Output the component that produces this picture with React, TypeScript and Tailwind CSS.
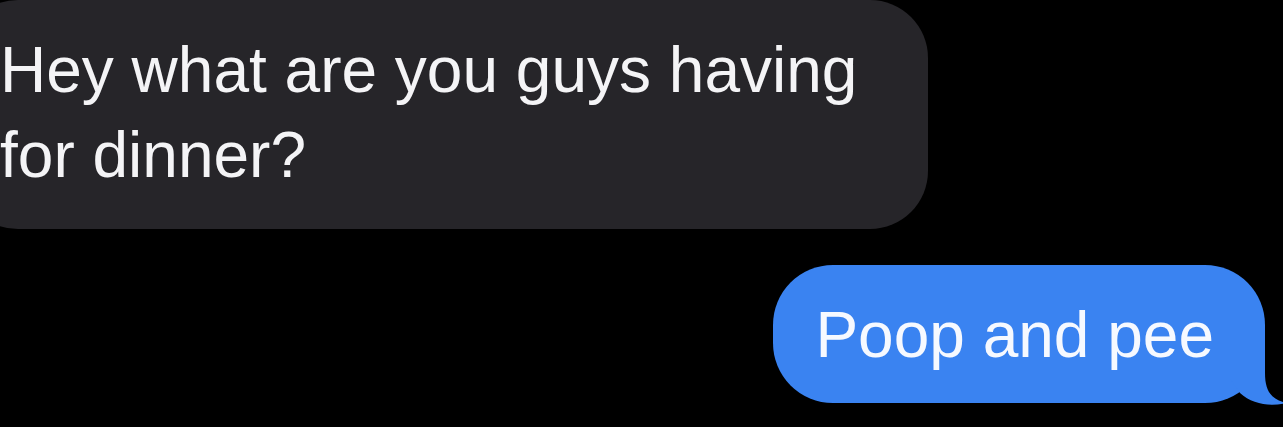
import React from "react";

export default function App() {
  return (
    <div
      className="w-[1283px] h-[427px] overflow-hidden bg-black text-white"
      style={{ fontFamily: '"Liberation Sans", Arial, sans-serif' }}
    >
      <div className="flex flex-col">
        {/* incoming grey bubble */}
        <div className="ml-[-40px] w-[968px] rounded-[58px] bg-[#262529] pl-[40px] pr-[56px] pt-[28px] pb-[31px] text-[64px] leading-[85px] text-[#f4f4f6]">
          Hey what are you guys having for dinner?
        </div>

        {/* outgoing blue bubble */}
        <div className="mt-[36px] flex justify-end pr-[18px]">
          <div className="relative rounded-[60px] bg-[#3a83f1] pl-[42px] pr-[51px] pt-[28px] pb-[25px] text-[64px] leading-[85px] text-[#f6f9ff]">
            <span className="relative z-10">Poop and pee</span>
            <svg
              className="absolute right-[-18px] bottom-[-4px]"
              width="53"
              height="70"
              viewBox="0 0 53 70"
            >
              <path
                d="M0 0 L35 0 L35 36 C35 54 41 62 56 66 C40 70 22 67 10 56 L0 42 Z"
                fill="#3a83f1"
              />
            </svg>
          </div>
        </div>
      </div>
    </div>
  );
}
